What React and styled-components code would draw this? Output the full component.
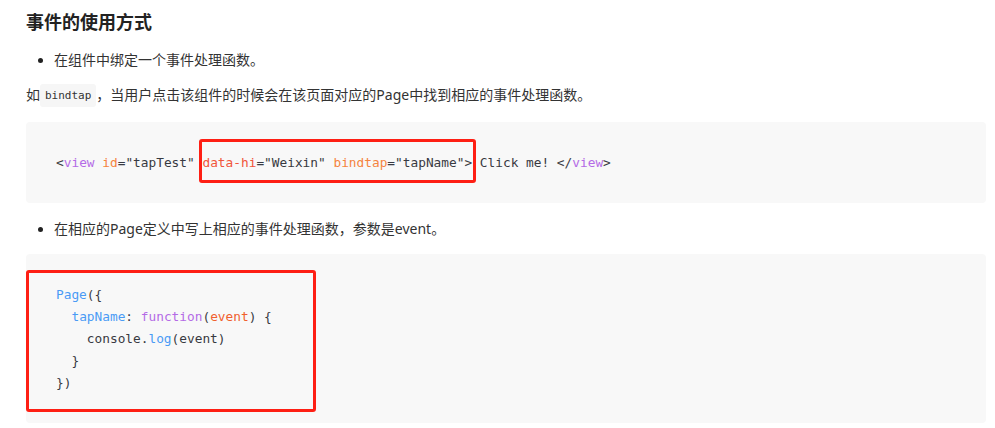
import styled, { createGlobalStyle } from "styled-components";

const GlobalStyle = createGlobalStyle`
  html, body {
    margin: 0;
    padding: 0;
    background: #fff;
  }
  body {
    font-family: "Noto Sans", "Noto Sans CJK SC", sans-serif;
    color: #333;
  }
`;

const Page = styled.div`
  width: 995px;
  height: 428px;
  box-sizing: border-box;
  padding: 9px 9px 0 26px;
  overflow: hidden;
`;

const Heading = styled.h3`
  margin: 0;
  font-size: 18px;
  line-height: 26px;
  font-weight: 700;
  color: #222;
`;

const List = styled.ul`
  list-style: none;
  margin: ${(p) => p.$top}px 0 0 0;
  padding: 0 0 0 12px;
`;

const Item = styled.li`
  display: flex;
  align-items: center;
  gap: 11px;
  font-size: 14px;
  line-height: 22px;

  &::before {
    content: "";
    width: 5px;
    height: 5px;
    border-radius: 50%;
    background: #222;
    flex: none;
  }
`;

const Para = styled.p`
  margin: 13px 0 0 0;
  font-size: 14px;
  line-height: 22px;
`;

const InlineCode = styled.code`
  display: inline-block;
  font-family: "DejaVu Sans Mono", "Liberation Mono", monospace;
  font-size: 11px;
  line-height: 23px;
  padding: 0 5px;
  background: #f6f6f6;
  border-radius: 3px;
  color: #333;
  vertical-align: top;
`;

const CodeBlock = styled.pre`
  position: relative;
  margin: ${(p) => p.$top}px 0 0 0;
  padding: 29.5px 30px;
  background: #f8f8f8;
  border-radius: 4px;
  font-family: "DejaVu Sans Mono", "Liberation Mono", monospace;
  font-size: 12.8px;
  line-height: 22px;
  color: #383a42;
  white-space: pre;
`;

// red annotation frame drawn over the code
const Mark = styled.div`
  position: absolute;
  left: ${(p) => p.$x}px;
  top: ${(p) => p.$y}px;
  width: ${(p) => p.$w}px;
  height: ${(p) => p.$h}px;
  box-sizing: border-box;
  border: 3px solid #fe1f14;
  border-radius: 3px;
  pointer-events: none;
`;

const Tag = styled.span`color: #b46be6;`;
const Attr = styled.span`color: ${(p) => (p.$hot ? "#f1553a" : "#f5843f")};`;
const Fn = styled.span`color: #4a9bf5;`;
const Kw = styled.span`color: #b46be6;`;
const Param = styled.span`color: #f0602f;`;

const App = () => {
  return (
    <>
      <GlobalStyle />
      <Page>
        <Heading>事件的使用方式</Heading>

        <List $top={14}>
          <Item>在组件中绑定一个事件处理函数。</Item>
        </List>

        <Para>
          如<InlineCode>bindtap</InlineCode>，当用户点击该组件的时候会在该页面对应的Page中找到相应的事件处理函数。
        </Para>

        <CodeBlock $top={15}>
          {"<"}<Tag>view</Tag> <Attr>id</Attr>{'="tapTest" '}
          <Attr $hot>data-hi</Attr>{'="Weixin" '}
          <Attr>bindtap</Attr>{'="tapName"> Click me! </'}
          <Tag>view</Tag>{">"}
          <Mark $x={173} $y={17} $w={277} $h={44} />
        </CodeBlock>

        <List $top={15}>
          <Item>在相应的Page定义中写上相应的事件处理函数，参数是event。</Item>
        </List>

        <CodeBlock $top={14}>
          <Fn>Page</Fn>{"({\n  "}
          <Fn>tapName</Fn>{": "}<Kw>function</Kw>{"("}<Param>event</Param>{") {\n    console."}
          <Fn>log</Fn>{"(event)\n  }\n})"}
          <Mark $x={0} $y={16} $w={290} $h={142} />
        </CodeBlock>
      </Page>
    </>
  );
};

export default App;
